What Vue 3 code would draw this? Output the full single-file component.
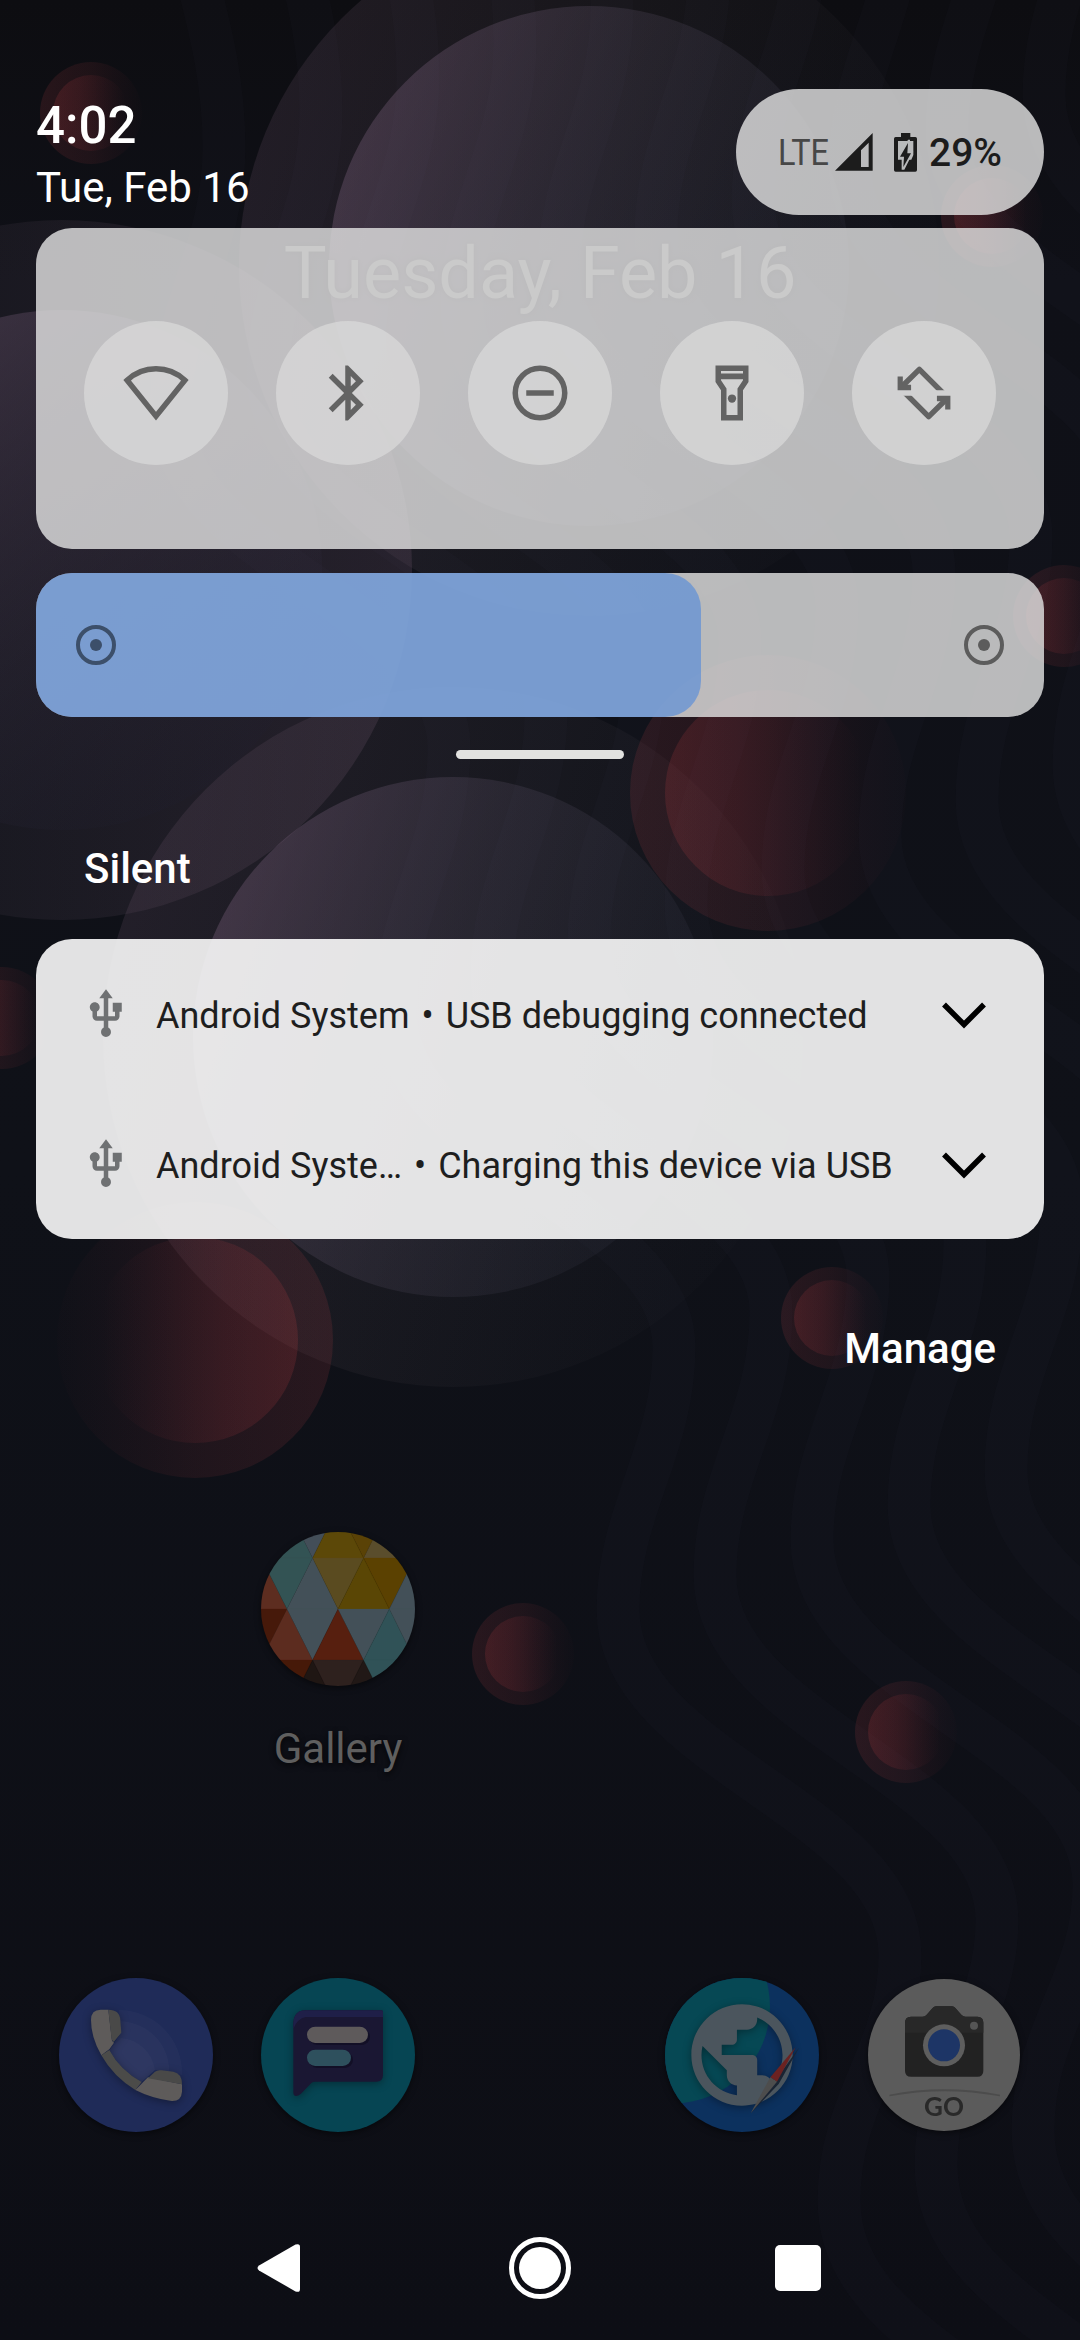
<script setup>
const stripes = Array.from({ length: 12 }, (_, k) => ({ x: k * 97, y: k * -35 }))

const purple = [
  { cx: 589, cy: 266, inner: 'url(#plum)', outer: 'url(#plumHalo)' },
  { cx: 62, cy: 570, inner: 'url(#plumDim)', outer: 'url(#plumHaloRight)' },
  { cx: 453, cy: 1037, inner: 'url(#plum)', outer: 'url(#plumHalo)' }
]
const red = [
  { cx: 768, cy: 793, r: 103, R: 138 },
  { cx: 195, cy: 1340, r: 103, R: 138, flip: true },
  { cx: 91, cy: 113, r: 38, R: 51 },
  { cx: 992, cy: 216, r: 38, R: 51 },
  { cx: 1064, cy: 616, r: 38, R: 51 },
  { cx: 2, cy: 1018, r: 38, R: 51 },
  { cx: 832, cy: 1318, r: 38, R: 51 },
  { cx: 523, cy: 1654, r: 38, R: 51 },
  { cx: 906, cy: 1732, r: 38, R: 51 }
]

const facets = [
  ['64,144 141,-9 218,144', '#335354'],
  ['141,-9 294,-9 218,144', '#434e58'],
  ['294,-9 218,144 371,144', '#5c4808'],
  ['294,-9 448,-9 371,144', '#5a4206'],
  ['448,-9 371,144 524,144', '#5a4d2c'],
  ['64,144 141,297 -13,297', '#5d2d20'],
  ['64,144 218,144 141,297', '#335354'],
  ['218,144 141,297 294,297', '#435058'],
  ['218,144 371,144 294,297', '#5a4b20'],
  ['371,144 294,297 448,297', '#5a4605'],
  ['371,144 524,144 448,297', '#5b4101'],
  ['524,144 448,297 601,297', '#435058'],
  ['-13,297 141,297 64,450', '#46190a'],
  ['141,297 64,450 218,450', '#5c2c1f'],
  ['141,297 294,297 218,450', '#435058'],
  ['294,297 218,450 371,450', '#571f0f'],
  ['294,297 448,297 371,450', '#435058'],
  ['448,297 371,450 524,450', '#305257'],
  ['448,297 601,297 524,450', '#435058'],
  ['64,450 218,450 141,603', '#461908'],
  ['218,450 141,603 294,603', '#1f1613'],
  ['218,450 371,450 294,603', '#2e211e'],
  ['371,450 294,603 448,603', '#211816'],
  ['371,450 524,450 448,603', '#305257']
]

const notifications = [
  { app: 'Android System', text: 'USB debugging connected' },
  { app: 'Android Syste…', text: 'Charging this device via USB' }
]
</script>

<template>
  <div class="screen">
    <svg class="wallpaper" width="1080" height="2340" viewBox="0 0 1080 2340">
      <defs>
        <linearGradient id="base" x1="0" y1="0" x2="0" y2="1">
          <stop offset="0" stop-color="#0d0d11" />
          <stop offset=".12" stop-color="#0f1017" />
          <stop offset=".5" stop-color="#0f1118" />
          <stop offset="1" stop-color="#0d0e15" />
        </linearGradient>
        <linearGradient id="plum" x1=".02" y1=".35" x2=".85" y2=".65">
          <stop offset="0" stop-color="#886a88" stop-opacity=".32" />
          <stop offset=".5" stop-color="#6c6078" stop-opacity=".2" />
          <stop offset="1" stop-color="#505064" stop-opacity=".12" />
        </linearGradient>
        <linearGradient id="plumDim" x1=".1" y1="0" x2=".75" y2=".9">
          <stop offset="0" stop-color="#886a88" stop-opacity=".36" />
          <stop offset="1" stop-color="#202034" stop-opacity=".12" />
        </linearGradient>
        <linearGradient id="plumHalo" x1="0" y1=".35" x2="1" y2=".65">
          <stop offset="0" stop-color="#94708e" stop-opacity=".15" />
          <stop offset=".5" stop-color="#807078" stop-opacity=".08" />
          <stop offset="1" stop-color="#606068" stop-opacity=".01" />
        </linearGradient>
        <linearGradient id="plumHaloRight" x1="0" y1="0" x2="1" y2="0">
          <stop offset="0" stop-color="#70687a" stop-opacity=".04" />
          <stop offset=".6" stop-color="#886c84" stop-opacity=".12" />
          <stop offset="1" stop-color="#94708e" stop-opacity=".17" />
        </linearGradient>
        <linearGradient id="ember">
          <stop offset="0" stop-color="#d84448" stop-opacity=".16" />
          <stop offset=".35" stop-color="#d04048" stop-opacity=".125" />
          <stop offset=".95" stop-color="#c03848" stop-opacity="0" />
        </linearGradient>
        <linearGradient id="emberHalo">
          <stop offset="0" stop-color="#d8484e" stop-opacity=".13" />
          <stop offset=".5" stop-color="#d8484e" stop-opacity=".085" />
          <stop offset="1" stop-color="#c03848" stop-opacity=".01" />
        </linearGradient>
      </defs>
      <rect width="1080" height="2340" fill="url(#base)" />
      <g fill="none" stroke="#7070a0" stroke-opacity=".028" stroke-width="43">
        <path
          v-for="(s, i) in stripes"
          :key="i"
          :transform="`translate(${s.x} ${s.y})`"
          d="M171 -190 C171 -60 224 20 224 147 C224 250 171 310 171 410 C171 560 449 610 449 747 C449 850 395 910 395 1010 C395 1160 674 1210 674 1347 C674 1450 618 1510 618 1610 C618 1760 900 1810 900 1955 C900 2050 839 2100 839 2200 C839 2320 980 2360 1080 2470"
        />
      </g>
      <g v-for="(c, i) in purple" :key="'p' + i">
        <circle :cx="c.cx" :cy="c.cy" r="350" :fill="c.outer" />
        <circle :cx="c.cx" :cy="c.cy" r="260" :fill="c.inner" />
      </g>
      <g
        v-for="(c, i) in red"
        :key="'r' + i"
        :transform="`translate(${c.cx} ${c.cy}) scale(${c.flip ? -1 : 1} 1)`"
      >
        <circle :r="c.R" fill="url(#emberHalo)" />
        <circle :r="c.r" fill="url(#ember)" />
      </g>
    </svg>

    <main class="launcher">
      <div class="glance">Tuesday, Feb 16</div>

      <div class="apps">
        <div class="app">
          <svg class="app-icon" viewBox="63 66 462 462">
            <clipPath id="galleryClip"><circle cx="294" cy="297" r="231" /></clipPath>
            <g clip-path="url(#galleryClip)">
              <polygon v-for="(f, i) in facets" :key="i" :points="f[0]" :fill="f[1]" :stroke="f[1]" stroke-width=".6" />
            </g>
          </svg>
          <span class="app-name">Gallery</span>
        </div>
      </div>

      <div class="dock">
        <svg class="app-icon" viewBox="57 54 462 462">
          <circle cx="288" cy="285" r="231" fill="#1f2b58" />
          <g fill="#fff" fill-opacity=".022">
            <path d="M236 150A190 188 0 0 1 426 345L345 330 305 366Q240 330 208 270L244 218Z" />
            <path d="M242 184A150 150 0 0 1 388 333L345 330 305 366Q240 330 208 270L244 218Z" />
            <path d="M243 234A112 112 0 0 1 345 330L305 366Q240 330 208 270Z" />
          </g>
          <g class="lifted">
            <path d="M153 180Q153 149 182 149H205L216 242 222 248 208 268 184 286Q153 232 153 180Z" fill="#5e5b5a" />
            <path d="M205 149Q239 149 241 180L244 218 221 246Q215 243 214 232Z" fill="#494948" />
            <path d="M208 270Q240 330 305 366L286 390Q220 350 184 286Z" fill="#4b4b49" />
            <path d="M286 390L324 352 426 373V395Q424 424 395 423 335 415 286 390Z" fill="#5e5b5a" />
            <path d="M324 355L345 335Q352 329 365 331L400 335Q426 340 426 373Z" fill="#494948" />
          </g>
        </svg>

        <svg class="app-icon" viewBox="663 54 462 462">
          <circle cx="894" cy="285" r="231" fill="#064553" />
          <g class="lifted">
            <path d="M760 190Q762 151 797 151H1024Q1029 151 1029 156V345Q1029 365 1009 365H825Q818 365 814 369L783 401Q775 408 768 408 760 407 760 398Z" fill="#1a1733" />
            <path d="M760 206V190Q762 151 797 151H1024Q1029 151 1029 156V171H797Q772 176 760 206Z" fill="#1f1f48" />
          </g>
          <rect x="807" y="206" width="183" height="49" rx="24.500" fill="#120f26" />
          <rect x="807" y="275" width="132" height="49" rx="24.500" fill="#120f26" />
          <rect x="801" y="200" width="183" height="49" rx="24.500" fill="#5e5a5b" />
          <rect x="801" y="269" width="132" height="49" rx="24.500" fill="#2e505d" />
        </svg>

        <span class="dock-gap"></span>

        <svg class="app-icon" viewBox="75 54 462 462">
          <clipPath id="browserClip"><circle cx="306" cy="285" r="231" /></clipPath>
          <g clip-path="url(#browserClip)">
            <rect x="75" y="54" width="462" height="462" fill="#0c315e" />
            <circle cx="100" cy="140" r="290" fill="#064854" />
          </g>
          <g class="lifted">
            <path
              transform="translate(123.600 102.600) scale(15.200)"
              fill="#4b555d"
              d="M12 2C6.480 2 2 6.480 2 12s4.480 10 10 10 10-4.480 10-10S17.520 2 12 2zm-1 17.930c-3.950-.49-7-3.850-7-7.930 0-.62.08-1.210.21-1.790L9 15v1c0 1.100.9 2 2 2v1.930zm6.900-2.540c-.26-.81-1-1.390-1.900-1.390h-1v-3c0-.55-.45-1-1-1H8v-2h2c.55 0 1-.45 1-1V7h2c1.100 0 2-.9 2-2v-.41c2.930 1.190 5 4.060 5 7.410 0 2.080-.8 3.970-2.100 5.390z"
            />
          </g>
          <path d="M478 262L416 372 332 460 405 362Z" fill="#1a2433" />
          <path d="M467 262L391 352 411 365Z" fill="#6b2221" />
          <path d="M391 352L411 365 332 460Z" fill="#4d4d4d" />
        </svg>

        <svg class="app-icon" viewBox="681 54 462 462">
          <circle cx="912" cy="285" r="228" fill="#5b5b5b" />
          <path d="M748 409Q912 378 1080 409L1080 404Q912 372 748 404Z" fill="#4c4c4c" />
          <path d="M813 170H848Q855 170 860 164L878 144Q882 139 888 139H936Q942 139 946 144L964 164Q970 170 976 170H1012Q1030 170 1030 188V332Q1030 350 1012 350H813Q795 350 795 332V188Q795 170 813 170Z" fill="#222" />
          <path d="M813 170H848Q855 170 860 164L878 144Q882 139 888 139H936Q942 139 946 144L964 164Q970 170 976 170H1012Q1030 170 1030 188V218H795V188Q795 170 813 170Z" fill="#282828" />
          <circle cx="912" cy="256" r="63" fill="#5e5e5e" />
          <circle cx="912" cy="256" r="48" fill="#1d3566" />
          <circle cx="1002" cy="197" r="12" fill="#555" />
          <text class="go" x="912" y="467" text-anchor="middle" textLength="120">GO</text>
        </svg>
      </div>
    </main>

    <section class="shade">
      <header class="status">
        <div class="clock">
          <div class="time">4:02</div>
          <div class="date">Tue, Feb 16</div>
        </div>
        <div class="pill">
          <svg class="lte" width="48" height="40" viewBox="0 0 48 40">
            <text x="-2" y="33" textLength="51" lengthAdjust="spacingAndGlyphs">LTE</text>
          </svg>
          <svg class="signal" width="38" height="38" viewBox="345 159 114 114">
            <path fill-rule="evenodd" d="M345 272L458 159V272ZM423 211L446 188V261H423Z" />
          </svg>
          <svg class="battery" width="23" height="39" viewBox="522 156 69 117">
            <path d="M543 156H571V168H586Q591 168 591 173V267Q591 272 586 272H527Q522 272 522 267V173Q522 168 527 168H543Z" />
            <path class="knock" d="M534 180H580V222L574 236H540L534 236Z" />
            <path class="knock" d="M564 176L534 234H545V266H553L580 212H570V176Z" />
            <path d="M564 186L540 227H552L550 258 573 217H562Z" />
          </svg>
          <span class="percent">29%</span>
        </div>
      </header>

      <div class="tiles">
        <div class="tile">
          <svg viewBox="0 0 24 24">
            <path fill="none" stroke="#636363" stroke-width="2" d="M1.500 7.350A15.300 15.300 0 0 1 22.500 7.350L12 20.400Z" />
          </svg>
        </div>
        <div class="tile">
          <svg viewBox="0 0 24 24">
            <path d="M17.710 7.710L12 2h-1v7.590L6.410 5 5 6.410 10.590 12 5 17.590 6.410 19 11 14.410V22h1l5.710-5.710-4.300-4.290 4.300-4.290zM13 5.830l1.880 1.880L13 9.590V5.830zm1.880 10.460L13 18.170v-3.760l1.880 1.880z" />
          </svg>
        </div>
        <div class="tile">
          <svg viewBox="0 0 24 24">
            <circle cx="12" cy="12" r="9" fill="none" stroke="#636363" stroke-width="2" />
            <path d="M7 11h10v2H7z" />
          </svg>
        </div>
        <div class="tile">
          <svg viewBox="0 0 24 24">
            <path fill-rule="evenodd" d="M6 2v6l2 3v11h8V11l2-3V2zM8 4h8v.9H8zM8 7h8v.4l-2 3V20h-4v-9.600l-2-3z" />
            <circle cx="12" cy="14" r="1.500" />
          </svg>
        </div>
        <div class="tile">
          <svg viewBox="0 0 24 24">
            <clipPath id="rotTop"><rect x="0" y="0" width="24" height="11" /></clipPath>
            <clipPath id="rotBottom"><rect x="0" y="13" width="24" height="11" /></clipPath>
            <g fill="none" stroke="#636363" stroke-width="2" stroke-linejoin="round">
              <path clip-path="url(#rotTop)" d="M3.700 9.900L10.300 3.400 19.900 13" />
              <path clip-path="url(#rotBottom)" d="M20.300 14.100L13.700 20.600 4.100 11" />
            </g>
            <path d="M2.400 6h1.900v3h3v2H2.400zM21.600 18h-1.900v-3h-3v-2h4.900z" />
          </svg>
        </div>
      </div>

      <div class="brightness">
        <div class="level">
          <svg width="42" height="42" viewBox="-21 -21 42 42" class="sun left">
            <circle r="18" /><circle class="dot" r="6" />
          </svg>
        </div>
        <svg width="42" height="42" viewBox="-21 -21 42 42" class="sun">
          <circle r="18" /><circle class="dot" r="6" />
        </svg>
      </div>

      <div class="handle"></div>

      <h2 class="silent">Silent</h2>

      <div class="notifications">
        <div v-for="n in notifications" :key="n.text" class="notification">
          <svg class="usb" viewBox="0 0 24 24">
            <path d="M15 7v4h1v2h-3V5h2l-3-4-3 4h2v8H8v-2.070c.7-.37 1.200-1.080 1.200-1.930 0-1.210-.99-2.200-2.200-2.200-1.210 0-2.200.99-2.200 2.200 0 .85.5 1.560 1.200 1.930V13c0 1.110.89 2 2 2h3v3.050c-.71.37-1.200 1.100-1.200 1.950 0 1.220.99 2.200 2.200 2.200 1.210 0 2.200-.98 2.200-2.200 0-.85-.49-1.580-1.200-1.950V15h3c1.110 0 2-.89 2-2v-2h1V7h-4z" />
          </svg>
          <span class="words">{{ n.app }}</span>
          <span class="words bullet">•</span>
          <span class="words">{{ n.text }}</span>
          <svg class="chevron" width="44" height="28" viewBox="0 0 44 28">
            <path d="M2 3.500L22 23.500 42 3.500" />
          </svg>
        </div>
      </div>

      <div class="manage">Manage</div>
    </section>

    <nav class="nav">
      <svg width="66" height="66" viewBox="0 0 66 66">
        <path d="M10 30.500L46.500 9.600Q51 8 51 12V54Q51 58 46.500 56.400L10 35.500Q7 33 10 30.500Z" />
      </svg>
      <svg width="66" height="66" viewBox="0 0 66 66">
        <circle cx="33" cy="33" r="28.500" fill="none" stroke="#fff" stroke-width="5" />
        <circle cx="33" cy="33" r="21" />
      </svg>
      <svg width="66" height="66" viewBox="0 0 66 66">
        <rect x="10" y="10" width="46" height="46" rx="5" />
      </svg>
    </nav>
  </div>
</template>

<style>
body {
  background: #0f1118;
}
</style>

<style scoped>
.screen {
  position: relative;
  width: 1080px;
  height: 2340px;
  overflow: hidden;
  background: #0f1118;
  font-family: Roboto, 'Noto Sans', sans-serif;
}
.wallpaper {
  position: absolute;
  inset: 0;
  display: block;
}

.launcher {
  position: absolute;
  inset: 0;
  display: flex;
  flex-direction: column;
}
.glance {
  margin-top: 232px;
  height: 84px;
  line-height: 84px;
  font-size: 72px;
  text-align: center;
  color: #666;
  text-shadow: 0 0 6px rgba(0, 0, 0, 0.5);
}
.apps {
  display: flex;
  margin-top: 1216px;
  padding-left: 237px;
}
.app {
  display: flex;
  flex-direction: column;
  align-items: center;
  width: 202px;
}
.app-icon {
  display: block;
  width: 154px;
  height: 154px;
  filter: drop-shadow(0 2px 3px rgba(0, 0, 0, 0.5));
}
.app-name {
  margin-top: 38px;
  line-height: 49px;
  font-size: 42px;
  color: #5f5f5f;
  text-shadow: 0 2px 6px rgba(0, 0, 0, 0.8);
}
.dock {
  display: flex;
  gap: 48px;
  margin-top: 205px;
  padding-left: 59px;
}
.dock-gap {
  width: 154px;
}
.lifted {
  filter: drop-shadow(0 6px 12px rgba(0, 0, 0, 0.35));
}
.go {
  font-family: Lato, sans-serif;
  font-weight: 700;
  font-size: 78px;
  fill: #292929;
}

.shade {
  position: absolute;
  inset: 0;
  display: flex;
  flex-direction: column;
  padding: 89px 36px 0;
}
.status {
  display: flex;
  justify-content: space-between;
  height: 139px;
}
.clock {
  margin-top: 7px;
  color: #fff;
}
.time {
  font-size: 51px;
  font-weight: 500;
  line-height: 60px;
}
.date {
  margin-top: 7px;
  font-size: 42px;
  line-height: 49px;
}
.pill {
  display: flex;
  align-items: center;
  box-sizing: border-box;
  width: 308px;
  height: 126px;
  padding-left: 44px;
  border-radius: 63px;
  background: rgba(225, 226, 226, 0.81);
  fill: #1c1c1c;
  color: #1c1c1c;
}
.lte {
  font-size: 37px;
  fill: #474747;
  overflow: visible;
}
.signal {
  margin-left: 7px;
}
.battery {
  margin-left: 21px;
}
.knock {
  fill: #b9babb;
}
.percent {
  margin: 2px 0 0 12px;
  font-size: 39px;
  font-weight: 500;
  line-height: 46px;
}

.tiles {
  display: flex;
  box-sizing: border-box;
  gap: 48px;
  height: 321px;
  padding: 93px 48px 0;
  border-radius: 36px;
  background: rgba(225, 226, 226, 0.81);
}
.tile {
  display: flex;
  align-items: center;
  justify-content: center;
  width: 144px;
  height: 144px;
  border-radius: 50%;
  background: rgba(217, 217, 217, 0.74);
}
.tile svg {
  width: 66px;
  height: 66px;
  fill: #636363;
}

.brightness {
  display: flex;
  align-items: center;
  justify-content: space-between;
  height: 144px;
  margin-top: 24px;
  padding-right: 39px;
  border-radius: 36px;
  background: rgba(225, 226, 226, 0.81);
}
.level {
  display: flex;
  align-items: center;
  box-sizing: border-box;
  width: 665px;
  height: 144px;
  padding-left: 39px;
  border-radius: 36px;
  background: rgba(77, 135, 220, 0.6);
}
.sun {
  fill: none;
  stroke: #5c5c5c;
  stroke-width: 4;
}
.sun .dot {
  fill: #5c5c5c;
  stroke: none;
}
.sun.left {
  stroke: #3c4f6a;
}
.sun.left .dot {
  fill: #3c4f6a;
}

.handle {
  align-self: center;
  width: 168px;
  height: 9px;
  margin-top: 33px;
  border-radius: 5px;
  background: #e2e2e0;
}
.silent {
  margin: 85px 0 0 48px;
  font-size: 42px;
  font-weight: 500;
  line-height: 49px;
  color: #fff;
}
.notifications {
  margin-top: 46px;
  border-radius: 36px;
  background: rgba(249, 249, 249, 0.9);
}
.notification {
  display: flex;
  align-items: center;
  height: 150px;
  padding: 0 58px 0 43px;
  font-size: 36px;
  line-height: 42px;
  color: #1e1e1e;
  white-space: pre;
}
.words {
  padding-top: 4px;
}
.usb {
  width: 54px;
  height: 54px;
  margin-right: 23px;
  fill: #6f7173;
}
.bullet {
  margin: 0 12px;
}
.chevron {
  margin-left: auto;
  margin-top: 2px;
  fill: none;
  stroke: #000;
  stroke-width: 5.500;
}
.manage {
  align-self: flex-end;
  margin: 85px 48px 0 0;
  font-size: 42px;
  font-weight: 500;
  line-height: 49px;
  color: #fff;
}

.nav {
  position: absolute;
  left: 0;
  right: 0;
  bottom: 39px;
  display: flex;
  justify-content: center;
  gap: 192px;
  fill: #fff;
}
</style>
